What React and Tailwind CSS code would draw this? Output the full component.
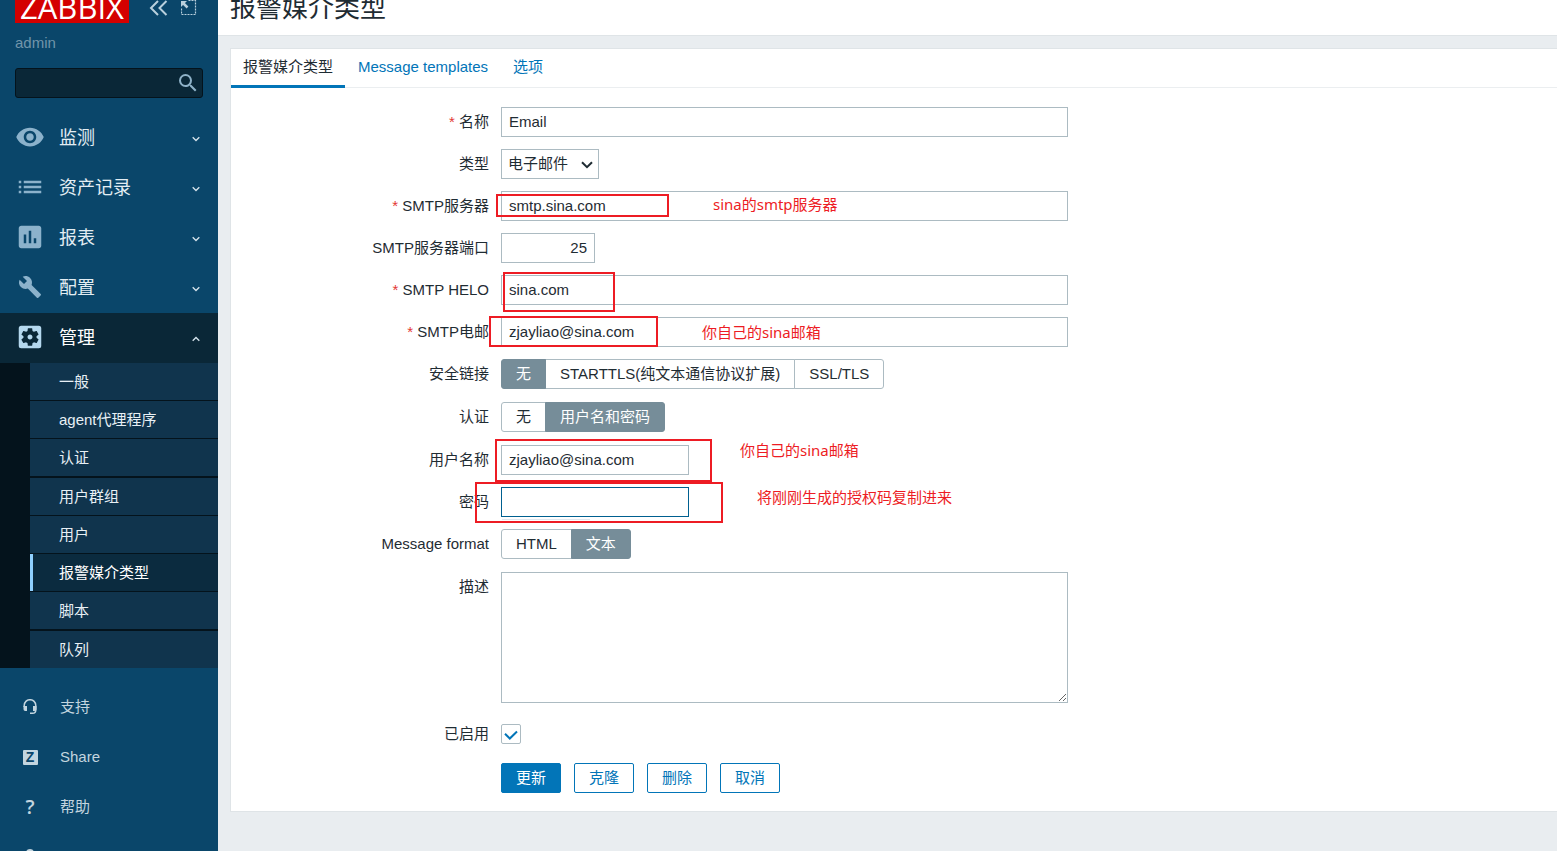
import React, { useState } from 'react';
import {
  MdAssessment,
  MdBuild,
  MdList,
  MdSearch,
  MdSettingsApplications,
  MdVisibility,
} from 'react-icons/md';

const MENU = [
  { key: 'monitoring', label: '监测', icon: MdVisibility, size: 30 },
  { key: 'inventory', label: '资产记录', icon: MdList, size: 30 },
  { key: 'reports', label: '报表', icon: MdAssessment, size: 30 },
  { key: 'configuration', label: '配置', icon: Wrench, size: 24 },
  { key: 'administration', label: '管理', icon: MdSettingsApplications, size: 30, open: true },
];

const SUBMENU = ['一般', 'agent代理程序', '认证', '用户群组', '用户', '报警媒介类型', '脚本', '队列'];
const ACTIVE_SUBMENU = '报警媒介类型';

const TABS = ['报警媒介类型', 'Message templates', '选项'];

const INPUT = 'block h-[30px] border bg-white px-[7px] pb-[2px] text-[#1f2c33] outline-none';

// head in the top left corner, handle towards the bottom right
function Wrench({ size }) {
  return (
    <svg width={size} height={size} viewBox="0 0 24 24" fill="currentColor">
      <path d="M22.7 19l-9.1-9.1c.9-2.3.4-5-1.5-6.9-2-2-5-2.400-7.400-1.300L9 6 6 9 1.600 4.700C.4 7.100.9 10.100 2.900 12.100c1.900 1.900 4.600 2.400 6.900 1.500l9.100 9.100c.4.4 1 .4 1.400 0l2.300-2.300c.5-.4.5-1.100.1-1.400z" />
    </svg>
  );
}

function Arrow({ up }) {
  return (
    <svg width="8" height="6" viewBox="0 0 8 6" fill="none" stroke="currentColor" strokeWidth="1.4">
      <path d={up ? 'M0.7 4.8L4 1.5L7.3 4.8' : 'M0.7 1.2L4 4.5L7.3 1.2'} />
    </svg>
  );
}

function HeadsetIcon() {
  return (
    <svg width="14" height="16" viewBox="0 0 14 16" fill="none" stroke="currentColor" strokeWidth="1.5">
      <path d="M1.2 8V6.500a5.800 5.800 0 0 1 11.600 0v4.500c0 2-1.300 3.300-3.300 3.300H7" />
      <path d="M0.500 7h3.500v5H2.200a1.700 1.700 0 0 1-1.700-1.700zM10 7h3.500v3.300a1.700 1.700 0 0 1-1.700 1.700H10z" fill="currentColor" stroke="none" />
    </svg>
  );
}

function UserIcon() {
  return (
    <svg width="16" height="16" viewBox="0 0 16 16" fill="currentColor">
      <circle cx="8" cy="4" r="4" />
      <path d="M0.500 15c0-3.500 3.500-5.500 7.500-5.500s7.500 2 7.500 5.500z" />
    </svg>
  );
}

function Sidebar() {
  return (
    <aside className="flex w-[218px] shrink-0 flex-col overflow-hidden bg-[#0a466a]">
      <div className="-mt-[7px] flex h-[30px] shrink-0 items-center px-[15px]">
        <a
          href="#logo"
          className="flex h-[30px] w-[114px] items-center justify-center bg-[#d40000] pb-[2px] font-['Open_Sans',sans-serif] text-[31px] leading-7 text-white"
        >
          ZABBIX
        </a>
        <button type="button" aria-label="Collapse sidebar" className="ml-5 text-[#b9d0dd]">
          <svg width="20" height="16" viewBox="0 0 20 16" fill="none" stroke="currentColor" strokeWidth="2">
            <path d="M9 1L2 8L9 15M17.500 1L10.500 8L17.500 15" />
          </svg>
        </button>
        <button type="button" aria-label="Hide sidebar" className="ml-3 text-[#b9d0dd]">
          <svg width="16" height="16" viewBox="0 0 16 16" fill="none" stroke="currentColor">
            <path d="M7.500 0.500H14.500V14.500H0.500V8" strokeDasharray="2 1" strokeWidth="1.200" />
            <path d="M0 1h6L0 7z" fill="currentColor" stroke="none" />
            <path d="M2 3L6.500 7.500" strokeWidth="2.500" />
          </svg>
        </button>
      </div>

      <div className="mt-[10px] px-[15px] leading-5 text-[#7195ab]">admin</div>

      <div className="mx-[15px] mt-[15px] flex h-[30px] shrink-0 items-center rounded-[3px] border border-[#04131c] bg-[#0a2737] pr-[2px]">
        <input type="text" aria-label="Search" className="min-w-0 flex-1 bg-transparent px-2 text-white outline-none" />
        <button type="button" aria-label="Search" className="text-[#8fb2c8]">
          <MdSearch size={24} />
        </button>
      </div>

      <nav className="mt-[15px] shrink-0">
        {MENU.map(({ key, label, icon: Icon, size, open }) => (
          <a
            key={key}
            href={`#${key}`}
            className={`flex h-[50px] items-center pr-[18px] text-[18px] ${
              open ? 'bg-[#0a2737] text-white' : 'text-[#e3edf3]'
            }`}
          >
            <span className={`flex w-[59px] justify-center pb-[2px] ${open ? 'text-[#b5d8ee]' : 'text-[#8cb2cb]'}`}>
              <Icon size={size} />
            </span>
            <span className="flex-1">{label}</span>
            <span className="pt-[2px] text-[#d3e1ea]">
              <Arrow up={open} />
            </span>
          </a>
        ))}
        <ul className="bg-[#04131c] pl-[30px]">
          {SUBMENU.map((item) => (
            <li key={item} className="border-b border-[#04131c] last:border-b-0 nth-[4n+3]:border-b-2">
              <a
                href={`#${item}`}
                className={`flex h-[37px] items-center ${
                  item === ACTIVE_SUBMENU
                    ? 'border-l-3 border-[#8fd0ff] bg-[#0b2b3f] pl-[26px] text-white'
                    : 'bg-[#10344d] pl-[29px] text-[#e8f0f5]'
                }`}
              >
                {item}
              </a>
            </li>
          ))}
        </ul>
      </nav>

      <nav className="mt-[14px] shrink-0 text-[#c3d5df]">
        <FooterLink href="#support" label="支持">
          <HeadsetIcon />
        </FooterLink>
        <FooterLink href="#share" label="Share">
          <span className="flex h-[15px] w-[15px] items-center justify-center rounded-[1px] bg-[#c3d5df] text-[14px] leading-none font-bold text-[#0a466a]">
            Z
          </span>
        </FooterLink>
        <FooterLink href="#help" label="帮助">
          <span className="font-['Open_Sans',sans-serif] text-[20px] leading-none font-semibold">?</span>
        </FooterLink>
        <FooterLink href="#profile">
          <UserIcon />
        </FooterLink>
      </nav>
    </aside>
  );
}

function FooterLink({ href, label, children }) {
  return (
    <a href={href} className="flex h-[50px] items-center">
      <span className="flex w-[60px] justify-center">{children}</span>
      {label && <span>{label}</span>}
    </a>
  );
}

function Row({ label, htmlFor, required, tall, children }) {
  const Tag = htmlFor ? 'label' : 'div';
  return (
    <div className={`flex gap-3 ${tall ? 'min-h-[31px]' : 'min-h-[30px]'}`}>
      <Tag htmlFor={htmlFor} className="w-[258px] shrink-0 text-right leading-[30px]">
        {required && <span className="text-[#e33734]">* </span>}
        {label}
      </Tag>
      <div className="relative min-w-0 flex-1">{children}</div>
    </div>
  );
}

function Segmented({ name, options, defaultValue }) {
  const [value, setValue] = useState(defaultValue);
  return (
    <div role="radiogroup" aria-label={name} className="flex">
      {options.map((option) => (
        <label
          key={option}
          className={`-ml-px h-[30px] border px-[14px] leading-7 first:ml-0 first:rounded-l-[3px] last:rounded-r-[3px] ${
            value === option ? 'z-1 border-[#768d99] bg-[#768d99] text-white' : 'border-[#acbbc2] bg-white'
          }`}
        >
          <input
            type="radio"
            name={name}
            checked={value === option}
            onChange={() => setValue(option)}
            className="sr-only"
          />
          {option}
        </label>
      ))}
    </div>
  );
}

// red frame drawn over a field
function Mark({ className }) {
  return <span className={`pointer-events-none absolute z-2 border-2 border-[#ed1c24] ${className}`} />;
}

function Note({ className, children }) {
  return (
    <span
      className={`pointer-events-none absolute z-2 font-['Noto_Sans','Noto_Sans_CJK_SC',sans-serif] leading-5 whitespace-nowrap text-[#ed1c24] ${className}`}
    >
      {children}
    </span>
  );
}

function MediaTypeForm() {
  const [enabled, setEnabled] = useState(true);
  return (
    <form className="flex flex-col gap-3 pt-[19px] pb-[18px]" onSubmit={(e) => e.preventDefault()}>
      <Row label="名称" htmlFor="name" required>
        <input id="name" type="text" defaultValue="Email" className={`${INPUT} w-full max-w-[567px] border-[#acbbc2]`} />
      </Row>

      <Row label="类型" htmlFor="type">
        <div className="relative w-[98px]">
          <select id="type" className="block h-[30px] w-full appearance-none border border-[#acbbc2] bg-white pl-[6px] outline-none">
            <option>电子邮件</option>
          </select>
          <svg
            className="pointer-events-none absolute top-3 right-[6px]"
            width="12"
            height="8"
            viewBox="0 0 12 8"
            fill="none"
            stroke="#1f2c33"
            strokeWidth="2"
          >
            <path d="M1 1.200L6 6.200L11 1.200" />
          </svg>
        </div>
      </Row>

      <Row label="SMTP服务器" htmlFor="smtp_server" required>
        <input id="smtp_server" type="text" defaultValue="smtp.sina.com" className={`${INPUT} w-full max-w-[567px] border-[#acbbc2]`} />
        <Mark className="top-[3px] -left-[5px] h-[23px] w-[173px]" />
        <Note className="top-[3px] left-[212px]">sina的smtp服务器</Note>
      </Row>

      <Row label="SMTP服务器端口" htmlFor="smtp_port">
        <input id="smtp_port" type="text" defaultValue="25" className={`${INPUT} w-[94px] border-[#acbbc2] text-right`} />
      </Row>

      <Row label="SMTP HELO" htmlFor="smtp_helo" required>
        <input id="smtp_helo" type="text" defaultValue="sina.com" className={`${INPUT} w-full max-w-[567px] border-[#acbbc2]`} />
        <Mark className="-top-[3px] left-[2px] h-10 w-28" />
      </Row>

      <Row label="SMTP电邮" htmlFor="smtp_email" required>
        <input id="smtp_email" type="text" defaultValue="zjayliao@sina.com" className={`${INPUT} w-full max-w-[567px] border-[#acbbc2]`} />
        <Mark className="-top-px -left-3 h-[31px] w-[169px]" />
        <Note className="top-[5px] left-[201px]">你自己的sina邮箱</Note>
      </Row>

      <Row label="安全链接" tall>
        <Segmented name="安全链接" options={['无', 'STARTTLS(纯文本通信协议扩展)', 'SSL/TLS']} defaultValue="无" />
      </Row>

      <Row label="认证" tall>
        <Segmented name="认证" options={['无', '用户名和密码']} defaultValue="用户名和密码" />
      </Row>

      <Row label="用户名称" htmlFor="username">
        <input id="username" type="text" defaultValue="zjayliao@sina.com" className={`${INPUT} w-[188px] border-[#acbbc2]`} />
        <Mark className="-top-[6px] -left-[6px] h-[43px] w-[217px]" />
        <Note className="-top-[5px] left-[239px]">你自己的sina邮箱</Note>
      </Row>

      <Row label="密码" htmlFor="password">
        <input id="password" type="password" className={`${INPUT} w-[188px] border-[#006090]`} />
        <span className="absolute top-8 left-px h-px w-[88px] bg-[#dfe6ee]" />
        <Mark className="-top-[5px] -left-[26px] h-[41px] w-[248px]" />
        <Note className="top-0 left-[256px]">将刚刚生成的授权码复制进来</Note>
      </Row>

      <Row label="Message format" tall>
        <Segmented name="Message format" options={['HTML', '文本']} defaultValue="文本" />
      </Row>

      <Row label="描述" htmlFor="description">
        <textarea id="description" className="mb-1 block h-[131px] w-full max-w-[567px] border border-[#acbbc2] bg-white px-[7px] py-1 outline-none" />
      </Row>

      <Row label="已启用" htmlFor="enabled">
        <div className="relative my-[5px] h-[22px] w-5">
          <input
            id="enabled"
            type="checkbox"
            checked={enabled}
            onChange={(e) => setEnabled(e.target.checked)}
            className="block h-5 w-5 appearance-none rounded-[2px] border border-[#acbbc2] bg-white"
          />
          {enabled && (
            <svg
              className="pointer-events-none absolute top-[6px] left-[3px]"
              width="14"
              height="10"
              viewBox="0 0 14 10"
              fill="none"
              stroke="#0275b8"
              strokeWidth="2"
            >
              <path d="M1 3.800L5.800 8.500L13 1.500" />
            </svg>
          )}
        </div>
      </Row>

      <div className="flex gap-[13px] pl-[270px]">
        <button type="submit" className="h-[30px] rounded-[2px] border border-[#0275b8] bg-[#0275b8] px-[14px] text-white">
          更新
        </button>
        {['克隆', '删除', '取消'].map((label) => (
          <button key={label} type="button" className="h-[30px] rounded-[2px] border border-[#0275b8] bg-white px-[14px] text-[#0275b8]">
            {label}
          </button>
        ))}
      </div>
    </form>
  );
}

export default function App() {
  const [tab, setTab] = useState(TABS[0]);

  return (
    <div className="flex h-screen overflow-hidden bg-[#e9edf0] font-['Liberation_Sans','Noto_Sans_CJK_SC',sans-serif] text-[15px] leading-5 text-[#1f2c33]">
      <Sidebar />
      <main className="min-w-0 flex-1">
        <header className="flex h-9 items-start border-b border-[#dfe4e7] bg-white px-3">
          <h1 className="-mt-[7px] text-[26px] leading-[30px]">报警媒介类型</h1>
        </header>

        <section className="mt-3 ml-3 border-y border-l border-[#dfe4e7] bg-white">
          <div role="tablist" className="flex h-[39px] gap-px border-b border-[#ebeef0]">
            {TABS.map((t) => (
              <button
                key={t}
                type="button"
                role="tab"
                aria-selected={tab === t}
                onClick={() => setTab(t)}
                className={`h-[39px] border-b-3 px-3 ${
                  tab === t ? 'border-[#0275b8]' : 'border-transparent text-[#0275b8]'
                }`}
              >
                {t}
              </button>
            ))}
          </div>
          <MediaTypeForm />
        </section>
      </main>
    </div>
  );
}
